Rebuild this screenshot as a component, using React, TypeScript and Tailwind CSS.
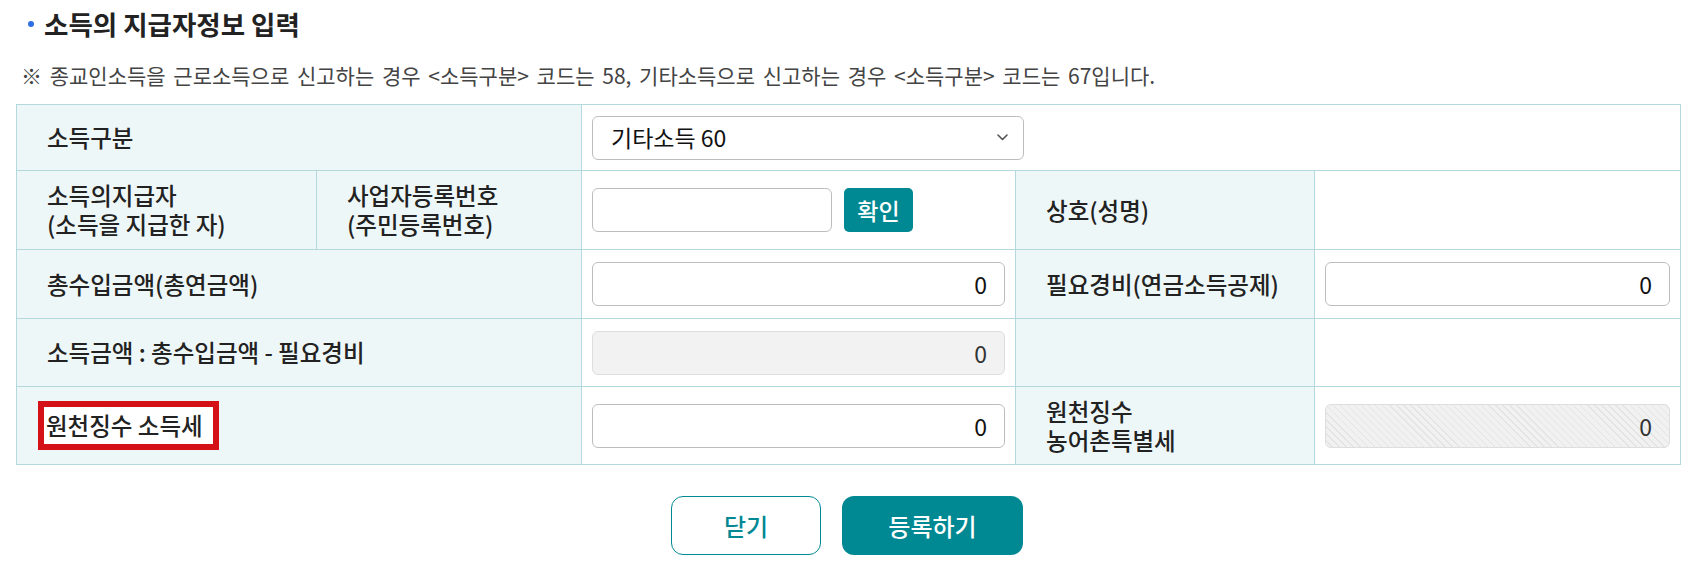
import React from "react";

const labelCls = "bg-[#eef7f7] border border-[#b4d9dc] px-[30px] text-[23.5px] font-medium text-[#222] leading-[29px] text-left";
const valueCls = "bg-white border border-[#b4d9dc] px-[10px]";
const inputCls = "w-full h-[44px] rounded-[6px] border border-[#bdbdbd] bg-white px-[17px] text-right text-[23px] text-[#111] outline-none";

const App = () => {
  return (
    <div className="w-[1693px] h-[571px] bg-white font-['Noto_Sans_CJK_KR',sans-serif] text-[#222]">
      <h2 className="flex items-center h-[48px] pl-[28px] text-[26.5px] font-bold text-[#222]">
        <span className="w-[6px] h-[6px] rounded-full bg-[#2f6fe4] mr-[10px]"></span>
        소득의 지급자정보 입력
      </h2>
      <p className="h-[56px] flex items-center pl-[21px] text-[21px] text-[#444] [word-spacing:3px]">
        ※ 종교인소득을 근로소득으로 신고하는 경우 &lt;소득구분&gt; 코드는 58, 기타소득으로 신고하는 경우 &lt;소득구분&gt; 코드는 67입니다.
      </p>

      <table className="ml-[16px] w-[1664px] border-collapse table-fixed">
        <colgroup>
          <col className="w-[300px]" />
          <col className="w-[265px]" />
          <col className="w-[434px]" />
          <col className="w-[299px]" />
          <col className="w-[366px]" />
        </colgroup>
        <tbody>
          <tr className="h-[66px]">
            <th colSpan={2} className={labelCls}>소득구분</th>
            <td colSpan={3} className={valueCls}>
              <div className="relative w-[432px]">
                <select
                  className="appearance-none w-full h-[44px] rounded-[6px] border border-[#bdbdbd] bg-white pl-[18px] text-[23px] text-[#111] outline-none"
                  defaultValue="60"
                >
                  <option value="60">기타소득 60</option>
                </select>
                <svg className="absolute right-[16px] top-[18px] pointer-events-none" width="11" height="7" viewBox="0 0 11 7" fill="none">
                  <path d="M1 1l4.5 4.5L10 1" stroke="#555" strokeWidth="1.6" strokeLinecap="round" strokeLinejoin="round" />
                </svg>
              </div>
            </td>
          </tr>
          <tr className="h-[79px]">
            <th className={labelCls}>
              소득의지급자
              <br />
              (소득을 지급한 자)
            </th>
            <th className={labelCls}>
              사업자등록번호
              <br />
              (주민등록번호)
            </th>
            <td className={valueCls}>
              <div className="flex items-center gap-[12px]">
                <input className="w-[240px] h-[44px] rounded-[6px] border border-[#bdbdbd] bg-white outline-none" />
                <button className="w-[69px] h-[44px] rounded-[5px] bg-[#008893] text-white text-[23px] font-medium">
                  확인
                </button>
              </div>
            </td>
            <th className={labelCls}>상호(성명)</th>
            <td className={valueCls}></td>
          </tr>
          <tr className="h-[69px]">
            <th colSpan={2} className={labelCls}>총수입금액(총연금액)</th>
            <td className={valueCls}>
              <input readOnly value="0" className={inputCls} />
            </td>
            <th className={labelCls}>필요경비(연금소득공제)</th>
            <td className={valueCls}>
              <input readOnly value="0" className={inputCls} />
            </td>
          </tr>
          <tr className="h-[68px]">
            <th colSpan={2} className={labelCls}>소득금액 : 총수입금액 - 필요경비</th>
            <td className={valueCls}>
              <input
                readOnly
                value="0"
                className="w-full h-[44px] rounded-[6px] border border-[#dedede] bg-[#f2f2f2] px-[17px] text-right text-[23px] text-[#333] outline-none"
              />
            </td>
            <th className={labelCls}></th>
            <td className={valueCls}></td>
          </tr>
          <tr className="h-[78px]">
            <th colSpan={2} className={labelCls}>
              <span className="inline-block -ml-[9px] border-[6px] border-[#d31117] bg-white pl-[2px] pr-[10px] leading-[37px]">
                원천징수 소득세
              </span>
            </th>
            <td className={valueCls}>
              <input readOnly value="0" className={inputCls} />
            </td>
            <th className={labelCls}>
              원천징수
              <br />
              농어촌특별세
            </th>
            <td className={valueCls}>
              <input
                readOnly
                value="0"
                className="w-full h-[44px] rounded-[6px] border border-[#dedede] bg-[repeating-linear-gradient(45deg,#f1f1f1_0px,#f1f1f1_4px,#e4e4e4_4px,#e4e4e4_5px)] px-[17px] text-right text-[23px] text-[#333] outline-none"
              />
            </td>
          </tr>
        </tbody>
      </table>

      <div className="flex justify-center gap-[21px] pt-[31px] pl-[1px]">
        <button className="w-[150px] h-[59px] rounded-[12px] border border-[#008893] bg-white text-[24px] font-medium text-[#008893]">
          닫기
        </button>
        <button className="w-[181px] h-[59px] rounded-[12px] bg-[#008893] text-[24px] font-medium text-white">
          등록하기
        </button>
      </div>
    </div>
  );
};

export default App;
